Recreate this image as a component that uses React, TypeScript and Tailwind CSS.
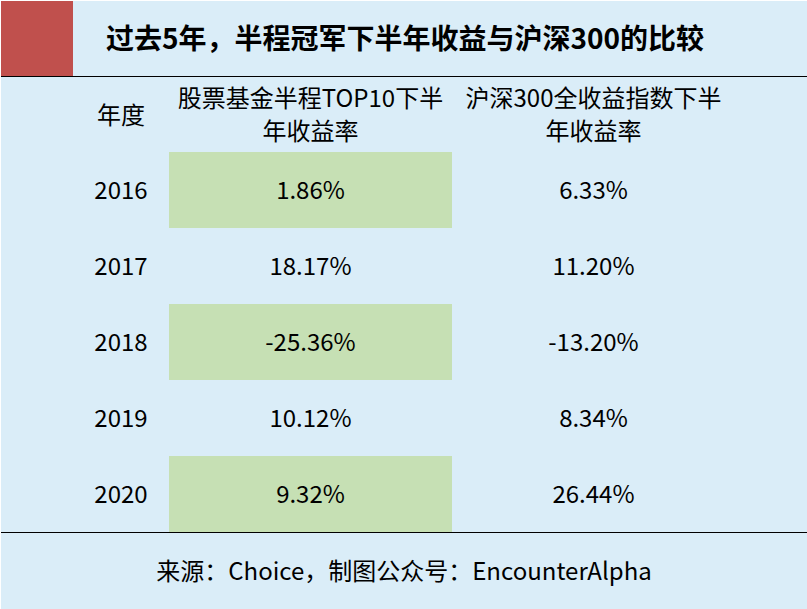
const rows = [
  { year: "2016", fund: "1.86%", index: "6.33%", hl: true },
  { year: "2017", fund: "18.17%", index: "11.20%", hl: false },
  { year: "2018", fund: "-25.36%", index: "-13.20%", hl: true },
  { year: "2019", fund: "10.12%", index: "8.34%", hl: false },
  { year: "2020", fund: "9.32%", index: "26.44%", hl: true },
]

export default function App() {
  return (
    <div
      className="flex h-[609px] w-[807px] flex-col border-l border-t border-white bg-[#daedf8] text-black"
      style={{ fontFamily: '"Noto Sans CJK SC", "Noto Sans", sans-serif' }}
    >
      <div className="flex h-[75px] items-center">
        <div className="h-full w-[72px] bg-[#c0504d]" />
        <h1 className="pb-[3px] pl-[33px] text-[28px] font-bold leading-none">
          过去5年，半程冠军下半年收益与沪深300的比较
        </h1>
      </div>
      <div className="h-px bg-black" />

      <div className="grid grid-cols-[96px_283px_283px] pl-[72px] text-[24px] leading-[33px]">
        <div className="flex h-[75px] items-center justify-center pb-[3px]">年度</div>
        <div className="flex h-[75px] items-center justify-center pb-[3px] text-center">
          股票基金半程TOP10下半
          <br />
          年收益率
        </div>
        <div className="flex h-[75px] items-center justify-center pb-[3px] text-center">
          沪深300全收益指数下半
          <br />
          年收益率
        </div>

        {rows.map((r) => (
          <div key={r.year} className="contents">
            <div className="flex h-[76px] items-center justify-center pb-[3px]">{r.year}</div>
            <div
              className={`flex h-[76px] items-center justify-center pb-[3px] ${
                r.hl ? "bg-[#c6e0b4]" : ""
              }`}
            >
              {r.fund}
            </div>
            <div className="flex h-[76px] items-center justify-center pb-[3px]">{r.index}</div>
          </div>
        ))}
      </div>

      <div className="h-px bg-black" />
      <div className="flex flex-1 items-center justify-center pb-[2px] text-[24px]">
        来源：Choice，制图公众号：EncounterAlpha
      </div>
    </div>
  )
}
